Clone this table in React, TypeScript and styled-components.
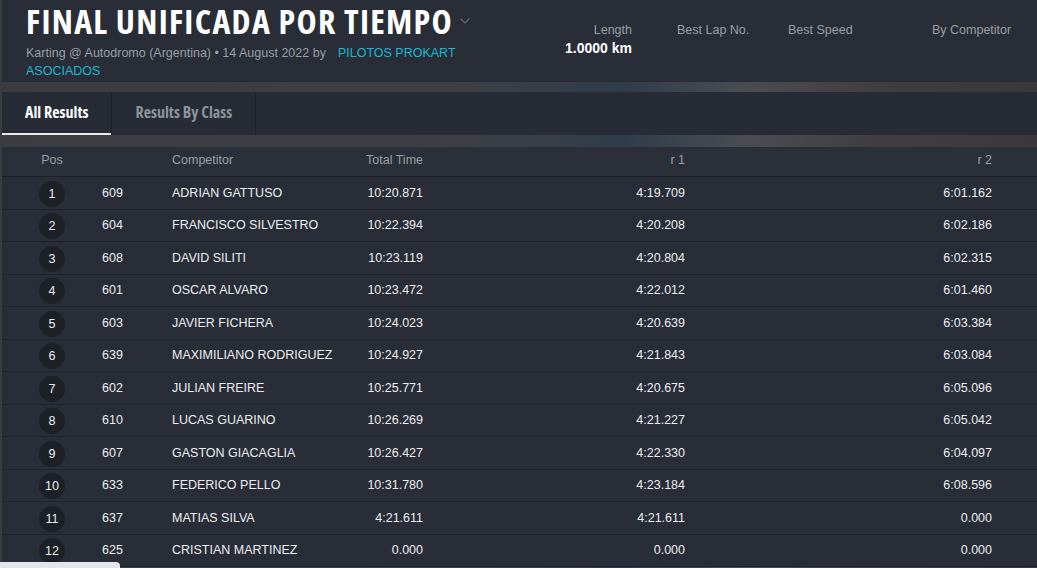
import React from "react";
import styled, { createGlobalStyle } from "styled-components";
import { ChevronDown } from "lucide-react";

interface Result {
  pos: number;
  no: string;
  name: string;
  total: string;
  r1: string;
  r2: string;
}

const results: Result[] = [
  { pos: 1, no: "609", name: "ADRIAN GATTUSO", total: "10:20.871", r1: "4:19.709", r2: "6:01.162" },
  { pos: 2, no: "604", name: "FRANCISCO SILVESTRO", total: "10:22.394", r1: "4:20.208", r2: "6:02.186" },
  { pos: 3, no: "608", name: "DAVID SILITI", total: "10:23.119", r1: "4:20.804", r2: "6:02.315" },
  { pos: 4, no: "601", name: "OSCAR ALVARO", total: "10:23.472", r1: "4:22.012", r2: "6:01.460" },
  { pos: 5, no: "603", name: "JAVIER FICHERA", total: "10:24.023", r1: "4:20.639", r2: "6:03.384" },
  { pos: 6, no: "639", name: "MAXIMILIANO RODRIGUEZ", total: "10:24.927", r1: "4:21.843", r2: "6:03.084" },
  { pos: 7, no: "602", name: "JULIAN FREIRE", total: "10:25.771", r1: "4:20.675", r2: "6:05.096" },
  { pos: 8, no: "610", name: "LUCAS GUARINO", total: "10:26.269", r1: "4:21.227", r2: "6:05.042" },
  { pos: 9, no: "607", name: "GASTON GIACAGLIA", total: "10:26.427", r1: "4:22.330", r2: "6:04.097" },
  { pos: 10, no: "633", name: "FEDERICO PELLO", total: "10:31.780", r1: "4:23.184", r2: "6:08.596" },
  { pos: 11, no: "637", name: "MATIAS SILVA", total: "4:21.611", r1: "4:21.611", r2: "0.000" },
  { pos: 12, no: "625", name: "CRISTIAN MARTINEZ", total: "0.000", r1: "0.000", r2: "0.000" },
];

const GlobalStyle = createGlobalStyle`
  html, body {
    margin: 0;
    padding: 0;
    height: 100%;
    overflow: hidden;
  }
  body {
    background: #34373e;
    font-family: "Liberation Sans", Arial, sans-serif;
  }
`;

const Page = styled.div`
  padding-left: 2px;
  background: linear-gradient(90deg, #3a3c42 0%, #3e3f45 45%, #2f3c4a 60%, #4a4c52 72%, #3f3d3f 85%, #3a383b 100%);
  height: 568px;
`;

const Header = styled.header`
  display: flex;
  height: 82px;
  box-sizing: border-box;
  padding: 0 0 0 24px;
  background: #282d37;
`;

const TitleBlock = styled.div`
  width: 435px;
  flex-shrink: 0;
`;

const TitleRow = styled.div`
  display: flex;
  align-items: center;
  gap: 4px;
  margin-top: 3px;
  color: #5d6470;

  svg {
    flex-shrink: 0;
  }
`;

const Title = styled.h1`
  margin: 0;
  font-family: "Open Sans", sans-serif;
  font-stretch: 75%;
  font-weight: 700;
  font-size: 34px;
  letter-spacing: 1.3px;
  line-height: 36px;
  color: #ffffff;
  white-space: nowrap;
`;

const Subtitle = styled.div`
  margin-top: 5px;
  font-size: 12.5px;
  line-height: 18px;
  color: #9a9fa6;
`;

const OrgLink = styled.span`
  margin-left: 12px;
  color: #1bb7d1;
`;

const Stats = styled.div`
  display: grid;
  grid-template-columns: 171px 156px 144px auto;
  align-content: start;
  padding-top: 21px;
`;

const Stat = styled.div<{ $right?: boolean; $offset?: number }>`
  text-align: ${({ $right }) => ($right ? "right" : "left")};
  padding-left: ${({ $offset }) => $offset ?? 0}px;
  white-space: nowrap;
`;

const StatLabel = styled.div`
  font-size: 12.5px;
  line-height: 18px;
  color: #9a9fa6;
`;

const StatValue = styled.div`
  font-size: 14px;
  font-weight: 700;
  line-height: 18px;
  color: #ffffff;
`;

const Tabs = styled.nav`
  display: flex;
  margin-top: 10px;
  height: 43px;
  background: #262b35;
`;

const Tab = styled.div<{ $active?: boolean }>`
  display: flex;
  align-items: center;
  padding: 0 23px 3px;
  font-family: "Open Sans", sans-serif;
  font-stretch: 75%;
  font-weight: 700;
  font-size: 16px;
  color: ${({ $active }) => ($active ? "#ffffff" : "#8d939b")};
  border-right: 1px solid #1d2128;
  box-shadow: ${({ $active }) => ($active ? "inset 0 -2px 0 #e9ecef" : "none")};
`;

const Table = styled.div`
  margin-top: 12px;
  background: #282d37;
`;

const Grid = styled.div`
  display: grid;
  grid-template-columns: 100px 70px 163px 88px 262px 307px 1fr;
  align-items: center;
`;

const HeadRow = styled(Grid)`
  height: 30px;
  padding-bottom: 4px;
  box-sizing: border-box;
  border-bottom: 1px solid #1c2027;
  background: #2a2f39;
`;

const HeadCell = styled.div<{ $align?: string }>`
  font-size: 12.5px;
  color: #9a9fa6;
  text-align: ${({ $align }) => $align ?? "left"};
`;

const Row = styled(Grid)`
  height: 32.5px;
  box-sizing: border-box;
  border-bottom: 1px solid #1f232b;
`;

const Cell = styled.div<{ $align?: string }>`
  font-size: 12.5px;
  color: #eceef0;
  text-align: ${({ $align }) => $align ?? "left"};
  white-space: nowrap;
`;

const PosCell = styled.div`
  display: flex;
  justify-content: center;
`;

const PosBadge = styled.span`
  display: flex;
  align-items: center;
  justify-content: center;
  width: 26px;
  height: 26px;
  margin-top: 2px;
  border-radius: 50%;
  background: #1c2027;
  font-size: 12.5px;
  color: #eceef0;
`;

const Toast = styled.div`
  position: fixed;
  left: 0;
  bottom: -20px;
  width: 120px;
  height: 26px;
  border-radius: 0 4px 0 0;
  background: #e4e5e7;
`;

export default function App() {
  return (
    <Page>
      <GlobalStyle />
      <Header>
        <TitleBlock>
          <TitleRow>
            <Title>FINAL UNIFICADA POR TIEMPO</Title>
            <ChevronDown size={16} strokeWidth={2} />
          </TitleRow>
          <Subtitle>
            Karting @ Autodromo (Argentina) • 14 August 2022 by
            <OrgLink>PILOTOS PROKART ASOCIADOS</OrgLink>
          </Subtitle>
        </TitleBlock>
        <Stats>
          <Stat $right>
            <StatLabel>Length</StatLabel>
            <StatValue>1.0000 km</StatValue>
          </Stat>
          <Stat $offset={45}>
            <StatLabel>Best Lap No.</StatLabel>
          </Stat>
          <Stat>
            <StatLabel>Best Speed</StatLabel>
          </Stat>
          <Stat>
            <StatLabel>By Competitor</StatLabel>
          </Stat>
        </Stats>
      </Header>
      <Tabs>
        <Tab $active>All Results</Tab>
        <Tab>Results By Class</Tab>
      </Tabs>
      <Table>
        <HeadRow>
          <HeadCell $align="center">Pos</HeadCell>
          <HeadCell />
          <HeadCell>Competitor</HeadCell>
          <HeadCell $align="right">Total Time</HeadCell>
          <HeadCell $align="right">r 1</HeadCell>
          <HeadCell $align="right">r 2</HeadCell>
          <HeadCell />
        </HeadRow>
        {results.map((r) => (
          <Row key={r.pos}>
            <PosCell>
              <PosBadge>{r.pos}</PosBadge>
            </PosCell>
            <Cell>{r.no}</Cell>
            <Cell>{r.name}</Cell>
            <Cell $align="right">{r.total}</Cell>
            <Cell $align="right">{r.r1}</Cell>
            <Cell $align="right">{r.r2}</Cell>
            <Cell />
          </Row>
        ))}
      </Table>
      <Toast />
    </Page>
  );
}
